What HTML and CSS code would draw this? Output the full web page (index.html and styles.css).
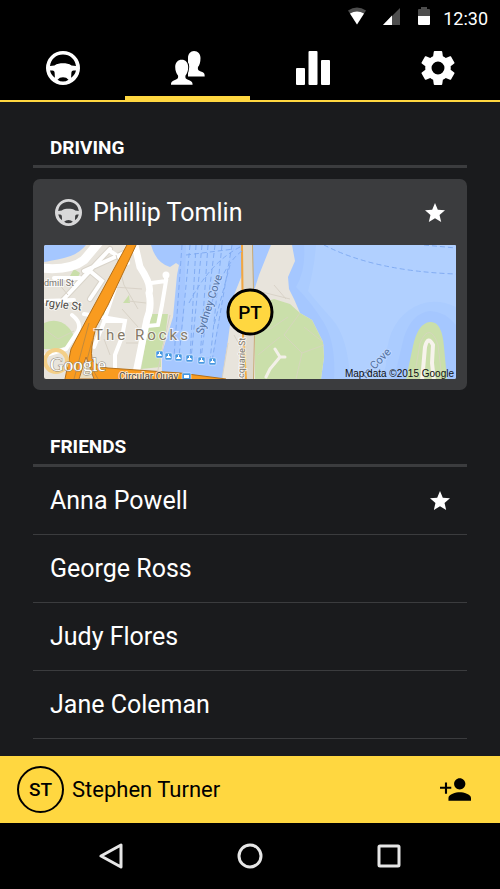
FILE: index.html
```html
<!DOCTYPE html>
<html lang="en">
<head>
  <meta charset="UTF-8">
  <meta name="viewport" content="width=device-width, initial-scale=1.0">
  <title>Friends</title>
  <link rel="stylesheet" href="styles.css">
</head>
<body>
  <!-- Shared icons -->
  <svg class="sprite" aria-hidden="true">
    <symbol id="wheel" viewBox="0 0 34 34">
      <path fill-rule="evenodd" d="M17 0a17 17 0 1 1 0 34a17 17 0 1 1 0-34zM4 15C5 8 10 3.500 17 3.500S29 8 30 15L25.500 14.500C23 12.700 20 12.300 17 12.300S11 12.700 8.500 14.500zM4 19.500h2.500q2 0 2.100 2l.3 5.200Q5 24 4 19.500zM30 19.500h-2.500q-2 0-2.100 2l-.3 5.200Q29 24 30 19.500zM11.500 28.700Q13.500 26.300 17 26.300T22.500 28.700Q20 30.600 17 30.600T11.500 28.700z"/>
    </symbol>
    <symbol id="star" viewBox="2 2 20 19">
      <path d="M12 17.270L18.180 21l-1.640-7.030L22 9.240l-7.190-.61L12 2 9.190 8.630 2 9.240l5.460 4.730L5.820 21z"/>
    </symbol>
  </svg>

  <div class="screen">
    <div class="status-bar">
      <svg class="status-icon" width="18" height="18" viewBox="0 0 18 18">
        <path fill="#4d4d4d" d="M9 17.500L0 3.500Q9-2.500 18 3.500z"/>
        <path fill="#fff" d="M9 17.500L2 6.500Q9 2.500 16 6.500z"/>
      </svg>
      <svg class="status-icon" width="18" height="18" viewBox="0 0 18 18">
        <path fill="#4d4d4d" d="M17 1v17H0z"/>
        <path fill="#fff" d="M9 8.500V18H0z"/>
      </svg>
      <svg class="status-icon" width="12" height="18" viewBox="0 0 12 18">
        <path fill="#4d4d4d" d="M0 9V3q0-1 1-1h2V0h6v2h2q1 0 1 1v6z"/>
        <path fill="#fff" d="M0 9h12v8q0 1-1 1H1q-1 0-1-1z"/>
      </svg>
      <span class="clock">12:30</span>
    </div>

    <nav class="tabs">
      <button class="tab" type="button" aria-label="Driving">
        <svg class="tab-icon"><use href="#wheel"/></svg>
      </button>
      <button class="tab active" type="button" aria-label="Friends">
        <svg class="tab-icon" viewBox="0 0 34 34">
          <path d="M23 0C27 0 29.500 3 29.500 7C29.500 11.500 28.500 14 27 16C26.500 19 27.500 19.500 30 20.500C33 21.500 33.700 22.500 33.700 25.500H17V7C17 3 19.500 0 23 0z"/>
          <path class="front" d="M10.700 8.700C14.500 8.700 17.200 11.400 17.200 16C17.200 20 16 22.500 14.500 24.500C14 27 14.700 27.800 17 28.700C20.500 29.900 21.600 31 21.600 33.800H0C0 31 1 29.900 4.500 28.700C6.800 27.800 7.500 27 7 24.500C5.500 22.500 4.200 20 4.200 16C4.200 11.400 7 8.700 10.700 8.700z"/>
        </svg>
      </button>
      <button class="tab" type="button" aria-label="Statistics">
        <svg class="tab-icon" viewBox="0 0 34 34">
          <rect x="0" y="17" width="9" height="17" rx="1"/>
          <rect x="12.500" y="0" width="9" height="34" rx="1"/>
          <rect x="25" y="9" width="9" height="25" rx="1"/>
        </svg>
      </button>
      <button class="tab" type="button" aria-label="Settings">
        <svg class="tab-icon" viewBox="2 2 20 20">
          <path fill-rule="evenodd" d="M19.430 12.980c.04-.32.07-.64.07-.98s-.03-.66-.07-.98l2.110-1.650c.19-.15.24-.42.12-.64l-2-3.460c-.12-.22-.39-.3-.61-.22l-2.490 1c-.52-.4-1.080-.73-1.690-.98l-.38-2.650C14.460 2.180 14.250 2 14 2h-4c-.25 0-.46.18-.49.42l-.38 2.650c-.61.25-1.170.59-1.690.98l-2.490-1c-.23-.09-.49 0-.61.22l-2 3.460c-.13.22-.07.49.12.64l2.110 1.650c-.04.32-.07.65-.07.98s.03.66.07.98l-2.110 1.650c-.19.15-.24.42-.12.64l2 3.460c.12.22.39.3.61.22l2.490-1c.52.4 1.080.73 1.690.98l.38 2.650c.03.24.24.42.49.42h4c.25 0 .46-.18.49-.42l.38-2.650c.61-.25 1.170-.59 1.690-.98l2.490 1c.23.09.49 0 .61-.22l2-3.460c.12-.22.07-.49-.12-.64zM12 8.200a3.800 3.800 0 1 0 0 7.600a3.800 3.800 0 1 0 0-7.600z"/>
        </svg>
      </button>
    </nav>

    <main class="content">
      <section class="driving">
        <h2 class="section-title">Driving</h2>
        <article class="card">
          <header class="card-header">
            <svg class="card-wheel" aria-hidden="true"><use href="#wheel"/></svg>
            <h3 class="name">Phillip Tomlin</h3>
            <button class="star" type="button" aria-label="Favourite"><svg><use href="#star"/></svg></button>
          </header>
          <div class="map">
            <svg class="map-art" viewBox="0 0 412 134" preserveAspectRatio="xMidYMid slice" role="img" aria-label="Map of The Rocks and Sydney Cove">
              <rect width="412" height="134" fill="#e8e4dc"/>

              <!-- Water -->
              <g fill="#a5c7ff">
                <path d="M0 0H42Q34 10 20 13T0 17z"/>
                <path d="M107 0H198V30L190 50L184 95L178 134H118V108L129 72L133 30L135 20L132 18L126 22Q112 18 107 0z"/>
                <path d="M208 0H227L215 30L210 46H208z"/>
                <path d="M248 0H412V134H277L280 112L279 97L268 75L256 68L250 54L245 44L244 32L251 16z"/>
              </g>
              <path fill="#abccff" d="M260 0H412V80Q400 66 386 66Q368 68 360 92L350 134H290Q292 98 280 78T252 42Q262 25 260 0z"/>
              <path fill="#b1d0ff" d="M272 0H412V62Q386 50 364 66T342 120L338 134H306Q304 92 288 74T264 46Q270 25 272 0z"/>
              <path fill="#accdff" d="M142 0H188L180 45L168 112H134L140 70z"/>

              <!-- Parks -->
              <g fill="#cadfaa">
                <path d="M211 60L230 54L246 59L256 68L268 75L279 97L280 112L277 134H211z"/>
                <path d="M362 134L369 101Q374 78 386 77T400 102L403 134z"/>
                <path d="M0 78Q14 72 24 82T26 100L14 104L0 104z"/>
                <path d="M108 69H124L122 85L117 108V122L97 124L104 84z"/>
                <path d="M26 31L30 24L36 28L34 32zM79 58L85 50L86 58zM56 70L66 50L68 54L61 74z"/>
              </g>
              <g fill="none" stroke="#d5d6bc">
                <path d="M256 68L240 90L258 108L280 100M236 92L214 110M258 108L252 134M244 72L226 84L212 76M279 97L260 82"/>
                <path d="M370 134L376 98Q386 76 394 100L398 134M0 84L14 94L30 86"/>
              </g>

              <!-- Minor streets -->
              <g fill="none" stroke="#d9d4ca" stroke-width="6" stroke-linecap="round">
                <path d="M32 40L66 4M16 58L46 26M46 54L58 36L46 26M40 26L80 8"/>
                <path d="M62 60L84 8"/>
              </g>
              <g fill="none" stroke="#fff" stroke-linecap="round">
                <path d="M-4 23Q26 26 40 15L56-4" stroke-width="9"/>
                <path d="M90-4L96 22Q108 40 105 48Q108 62 103 74L92 128" stroke-width="7"/>
                <g stroke-width="4">
                  <path d="M32 40L66 4M16 58L46 26M46 54L58 36L46 26M40 26L80 8M10 33H36M-2 56L30 55"/>
                  <path d="M40 69L81 76L78 92L71 110V124M81 76H60M62 70L82 10M62 72L50 102"/>
                  <path d="M28 70Q38 78 34 86L22 104L2 110M107 38L122 36L118 60M122 36V30M103 81L114 80L118 60"/>
                  <path d="M66 6L84 18"/>
                </g>
                <circle cx="122" cy="30" r="2" stroke-width="3"/>
              </g>
              <path fill="none" stroke="#d8d2c7" d="M72 10L80 40L94 64M70 42L98 44M84 56L102 58M78 64L94 82M0 36L14 38L24 50M60 94L66 110M82 98H94M126 70L112 134M184 98L178 134M190 90L200 108M214 46L246 54M230 40L242 54"/>
              <g fill="none" stroke-linecap="round" stroke-linejoin="round">
                <path d="M231 104L236 112L226 124L222 132M236 112L241 112" stroke="#f3f0e8" stroke-width="3"/>
                <path d="M378 136L381 102Q384 90 389 100L388 118L390 136" stroke="#f7f3ec" stroke-width="4"/>
              </g>

              <!-- Macquarie St and the expressway -->
              <path d="M203 0L205 90L204 134" stroke="#c7a873" stroke-width="12" fill="none"/>
              <path d="M203 0L205 90L204 134" stroke="#ded9cd" stroke-width="10" fill="none"/>
              <path d="M198 0L199 90L202 134" stroke="#f2a742" stroke-width="2" fill="none"/>
              <path d="M84-2H93L64 60L52 82Q46 104 48 114Q52 122 64 123L136 128L182 134V142H24L21 134L27 104L45 70z" fill="#f99b1f" stroke="#b46f17"/>
              <path d="M45 78L30 134M48 96L38 134M42 112L54 134" stroke="#c28a3c" fill="none"/>
              <path d="M35 134L42 112L50 134z" fill="#e8dcc0" stroke="#b8742a"/>

              <!-- Ferry routes -->
              <g fill="none" stroke="#82acf2" stroke-dasharray="5 3">
                <path d="M138 0L130 112M146 0L135 112M152 0L146 114M158 0L147 114M164 0L156 114M171 0L157 114M178 0L166 116M188 0L168 116M196 2Q165 18 144 60M198 6Q178 20 164 70M142 10L190 4M186 20L170 80"/>
                <path d="M280 0Q330 26 412 29M380 0L412 3"/>
              </g>
              <g fill="#4697e2" stroke="#fff" stroke-width=".5">
                <rect x="112" y="106" width="7" height="7" rx="1"/>
                <rect x="121" y="108" width="7" height="7" rx="1"/>
                <rect x="131" y="109" width="7" height="7" rx="1"/>
                <rect x="142" y="110" width="7" height="7" rx="1"/>
                <rect x="154" y="112" width="7" height="7" rx="1"/>
                <rect x="165" y="113" width="7" height="7" rx="1"/>
                <rect x="138" y="128" width="9" height="9" rx="1"/>
              </g>
              <path fill="#fff" d="M113 111h5l-1-2h-1v-2h-1v2h-1zM122 113h5l-1-2h-1v-2h-1v2h-1zM132 114h5l-1-2h-1v-2h-1v2h-1zM143 115h5l-1-2h-1v-2h-1v2h-1zM155 117h5l-1-2h-1v-2h-1v2h-1zM166 118h5l-1-2h-1v-2h-1v2h-1zM140 130h5v3h-5z"/>
              <circle cx="12" cy="116" r="11" fill="none" stroke="#f3cf88" stroke-width="4"/>

              <!-- Labels -->
              <g class="map-label">
                <text x="0" y="41" font-size="9">dmill St</text>
                <text x="1" y="61" font-size="11" class="dark" transform="rotate(7 1 61)">rgyle St</text>
                <text x="50" y="95" class="district">The Rocks</text>
                <text x="159" y="90" font-size="11" class="water" transform="rotate(-72 159 90)">Sydney Cove</text>
                <text x="200" y="133" font-size="9" transform="rotate(-88 200 133)">cquarie St</text>
                <text x="75" y="135" font-size="10" class="dark">Circular Quay</text>
                <text x="322" y="134" font-size="11" class="water" transform="rotate(-46 322 134)">m Cove</text>
              </g>
              <text x="6" y="126" class="map-logo">Google</text>
              <text x="410" y="132" class="map-credit">Map data ©2015 Google</text>
            </svg>
            <span class="avatar pin">PT</span>
          </div>
        </article>
      </section>

      <section class="friends">
        <h2 class="section-title">Friends</h2>
        <ul class="friend-list">
          <li class="friend">
            <a class="name" href="#">Anna Powell</a>
            <button class="star" type="button" aria-label="Favourite"><svg><use href="#star"/></svg></button>
          </li>
          <li class="friend"><a class="name" href="#">George Ross</a></li>
          <li class="friend"><a class="name" href="#">Judy Flores</a></li>
          <li class="friend"><a class="name" href="#">Jane Coleman</a></li>
        </ul>
      </section>
    </main>

    <footer class="user-bar">
      <span class="avatar">ST</span>
      <span class="user-name">Stephen Turner</span>
      <button class="add-friend" type="button" aria-label="Add friend">
        <svg width="31" height="23" viewBox="1 4 22 16">
          <path d="M15 12c2.210 0 4-1.790 4-4s-1.790-4-4-4-4 1.790-4 4 1.790 4 4 4zm-9-2V7H4.500v3H1v1.500h3.500V15H6v-3.500h3V10zm9 4c-2.670 0-8 1.340-8 4v2h16v-2c0-2.660-5.330-4-8-4z"/>
        </svg>
      </button>
    </footer>

    <nav class="system-nav">
      <button type="button" aria-label="Back">
        <svg width="26" height="26" viewBox="0 0 26 26"><path d="M3 13L23 2V24z"/></svg>
      </button>
      <button type="button" aria-label="Home">
        <svg width="26" height="26" viewBox="0 0 26 26"><circle cx="13" cy="13" r="11"/></svg>
      </button>
      <button type="button" aria-label="Recent apps">
        <svg width="26" height="26" viewBox="0 0 26 26"><rect x="3" y="3" width="20" height="20" rx="1"/></svg>
      </button>
    </nav>
  </div>
</body>
</html>
```
FILE: styles.css
```css
* {
  box-sizing: border-box;
}

body {
  margin: 0;
  background: #1a1b1d;
  color: #fff;
  font-family: Roboto, sans-serif;
}

button {
  display: flex;
  align-items: center;
  justify-content: center;
  padding: 0;
  border: 0;
  background: none;
  color: inherit;
  cursor: pointer;
}

svg {
  display: block;
  fill: currentColor;
}

.sprite {
  display: none;
}

.screen {
  display: flex;
  flex-direction: column;
  min-height: 100vh;
}

.status-bar {
  display: flex;
  align-items: center;
  justify-content: flex-end;
  gap: 17px;
  height: 36px;
  padding: 0 12px 0 0;
  background: #000;
}

.status-icon {
  margin-bottom: 4px;
}

.clock {
  margin-left: -4px;
  font-size: 18px;
}

.tabs {
  display: grid;
  grid-template-columns: repeat(4, 1fr);
  height: 66px;
  background: #000;
  border-bottom: 2px solid #ffd740;
}

.tab {
  height: 66px;
  border-bottom: 6px solid transparent;
}

.tab.active {
  border-bottom-color: #ffd740;
}

.tab-icon {
  width: 34px;
  height: 34px;
  margin-top: 3px;
}

.front {
  stroke: #000;
  stroke-width: 2;
  paint-order: stroke;
}

.content {
  flex: 1;
  padding: 32px 33px 0;
}

.section-title {
  margin: 0;
  padding: 0 17px 3px;
  border-bottom: 3px solid #3b3c3e;
  font-size: 19px;
  line-height: 28px;
  font-weight: 700;
  text-transform: uppercase;
}

.card {
  margin: 11px 0 43px;
  padding: 0 11px 11px;
  border-radius: 7px;
  background: #3b3c3e;
}

.card-header {
  display: flex;
  align-items: center;
  gap: 11px;
  height: 66px;
  padding: 0 11px;
}

.card-wheel {
  width: 27px;
  height: 27px;
  color: #d8d8d9;
}

.name {
  flex: 1;
  margin: 0;
  color: #fff;
  font-size: 25px;
  font-weight: 400;
  text-decoration: none;
}

.star svg {
  width: 20px;
  height: 19px;
}

.map {
  position: relative;
  border-radius: 2px;
  overflow: hidden;
}

.map-art {
  width: 100%;
  height: auto;
}

.map-label {
  fill: #77736d;
  stroke: #fff;
  stroke-width: 2px;
  stroke-opacity: 0.7;
  paint-order: stroke;
}

.map-label .dark {
  fill: #4c4a46;
}

.map-label .water {
  fill: #53719f;
  stroke: #c3dbff;
}

.map-label .district {
  fill: #857a68;
  font-size: 15px;
  letter-spacing: 3px;
}

.map-logo {
  fill: #fff;
  stroke: #8d8778;
  stroke-width: 1px;
  paint-order: stroke;
  font-family: "Liberation Serif", serif;
  font-size: 19px;
}

.map-credit {
  fill: #111;
  font-family: "Liberation Sans", sans-serif;
  font-size: 10px;
  text-anchor: end;
}

.avatar {
  display: flex;
  align-items: center;
  justify-content: center;
  width: 47px;
  height: 47px;
  border: 2px solid #000;
  border-radius: 50%;
  color: #000;
  font-size: 19px;
  font-weight: 500;
}

.pin {
  position: absolute;
  top: 50%;
  left: 50%;
  transform: translate(-50%, -50%);
  border-width: 3px;
  background: #ffd740;
}

.friend-list {
  margin: 0;
  padding: 0;
  list-style: none;
}

.friend {
  display: flex;
  align-items: center;
  height: 68px;
  padding: 0 17px;
  border-bottom: 1px solid #3b3c3e;
}

.user-bar {
  display: flex;
  align-items: center;
  gap: 8px;
  height: 67px;
  padding: 0 29px 0 17px;
  background: #ffd740;
  color: #000;
}

.user-name {
  flex: 1;
  font-size: 22px;
}

.system-nav {
  display: grid;
  grid-template-columns: repeat(3, 1fr);
  height: 66px;
  padding: 0 41px;
  background: #000;
}

.system-nav svg {
  fill: none;
  stroke: #e6e6e6;
  stroke-width: 3;
  stroke-linejoin: round;
}
```
